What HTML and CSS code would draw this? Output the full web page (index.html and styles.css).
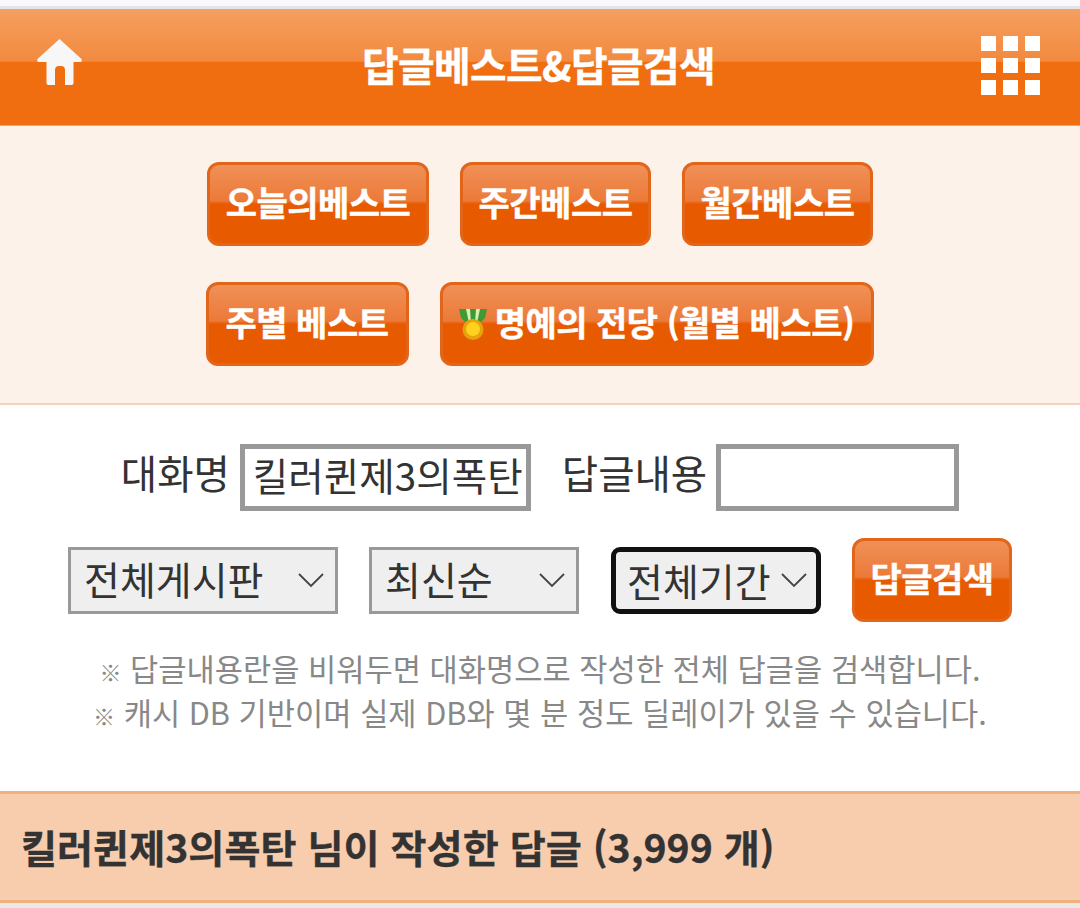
FILE: index.html
```html
<!DOCTYPE html>
<html lang="ko">
<head>
    <meta charset="UTF-8">
    <meta name="viewport" content="width=device-width, initial-scale=1.0">
    <title>답글베스트&amp;답글검색</title>
    <link rel="stylesheet" href="styles.css">
</head>
<body>

    <div class="status-strip"></div>

    <!-- Top bar -->
    <header class="topbar">
        <a class="home-link" href="#">
            <svg width="45" height="46" viewBox="0 0 45 46">
                <path fill="#f7f7f7" d="M22.500 0 L44.500 20 Q45.500 23 43 23 L36.500 23 L36.500 44 Q36.500 46 34.500 46 L28 46 L28 31 Q28 27 24 27 L22 27 Q18 27 18 31 L18 46 L11.500 46 Q9.500 46 9.500 44 L9.500 23 L2 23 Q-0.500 23 0.500 20 Z"/>
            </svg>
        </a>
        <h1 class="title">답글베스트&amp;답글검색</h1>
        <div class="grid-menu">
            <span></span><span></span><span></span>
            <span></span><span></span><span></span>
            <span></span><span></span><span></span>
        </div>
    </header>

    <!-- Best links -->
    <section class="best-panel">
        <div class="btn-row">
            <a class="btn btn-today" href="#">오늘의베스트</a>
            <a class="btn btn-week" href="#">주간베스트</a>
            <a class="btn btn-month" href="#">월간베스트</a>
        </div>
        <div class="btn-row">
            <a class="btn btn-weekly" href="#">주별 베스트</a>
            <a class="btn btn-hall" href="#">
                <svg class="medal" width="28" height="31" viewBox="0 0 28 31">
                    <path fill="#3f9a35" d="M0 0 H28 L26 9 L19 16 H9 L2 9 Z"/>
                    <path fill="#d8efb5" d="M7 0 H11 L12 14 H10 Z M17 0 H21 L18 14 H16 Z"/>
                    <circle cx="14" cy="20.500" r="10.500" fill="#e8a30c"/>
                    <circle cx="14" cy="20" r="7" fill="#ffd21f"/>
                </svg>명예의 전당 (월별 베스트)</a>
        </div>
    </section>

    <!-- Search form -->
    <form class="search-form">
        <div class="form-row form-row-names">
            <label class="field-label" for="nick">대화명</label>
            <input class="text-input nick-input" id="nick" type="text" value="킬러퀸제3의폭탄">
            <label class="field-label reply-label" for="reply">답글내용</label>
            <input class="text-input reply-input" id="reply" type="text">
        </div>
        <div class="form-row form-row-selects">
            <select class="pick pick-board"><option>전체게시판</option></select>
            <select class="pick pick-order"><option>최신순</option></select>
            <select class="pick pick-period"><option>전체기간</option></select>
            <button class="btn btn-search" type="button">답글검색</button>
        </div>
        <p class="note"><span class="note-mark">※</span> 답글내용란을 비워두면 대화명으로 작성한 전체 답글을 검색합니다.</p>
        <p class="note"><span class="note-mark">※</span> 캐시 DB 기반이며 실제 DB와 몇 분 정도 딜레이가 있을 수 있습니다.</p>
    </form>

    <div class="result-band">킬러퀸제3의폭탄 님이 작성한 답글 (3,999 개)</div>
    <div class="bottom-strip"></div>

</body>
</html>
```

FILE: styles.css
```css
/* General page styling */
body {
    margin: 0;
    height: 908px;
    overflow: hidden;
    background: #ffffff;
    color: #333333;
    font-family: "Noto Sans CJK KR", "Noto Sans", sans-serif;
}

.status-strip {
    height: 6px;
    background: #f8f8fd;
    border-bottom: 3px solid #e4e4e8;
}

/* Top bar */
.topbar {
    display: grid;
    grid-template-columns: 1fr auto 1fr;
    align-items: center;
    height: 116px;
    padding: 0 40px 0 37px;
    background: linear-gradient(#f59f60 0%, #f28a3e 45%, #f06e10 46%, #f06e10 100%);
    border-bottom: 1px solid #f2a468;
}

.home-link {
    display: flex;
    margin-top: -10px;
}

.title {
    margin: -8px 0 0;
    color: #ffffff;
    font-size: 39.8px;
    font-weight: 700;
    letter-spacing: -0.6px;
    -webkit-text-stroke: 0.4px #ffffff;
}

.grid-menu {
    display: grid;
    grid-template-columns: repeat(3, 15px);
    grid-auto-rows: 15px;
    gap: 7px;
    justify-content: end;
    margin-top: -4px;
}

.grid-menu span {
    background: #ffffff;
}

/* Best links */
.best-panel {
    display: flex;
    flex-direction: column;
    gap: 36px;
    padding: 36px 0 37px;
    background: #fdf2e9;
    border-bottom: 2px solid #f6d2b8;
}

.btn-row {
    display: flex;
    justify-content: center;
    gap: 31px;
}

.btn {
    display: flex;
    align-items: center;
    justify-content: center;
    box-sizing: border-box;
    height: 84px;
    padding: 0 0 6px;
    color: #ffffff;
    font-family: inherit;
    font-size: 34px;
    font-weight: 700;
    letter-spacing: -0.5px;
    text-decoration: none;
    white-space: nowrap;
    -webkit-text-stroke: 0.4px #ffffff;
    background: linear-gradient(#f09058 0%, #ec7a38 46%, #e85a00 50%, #e85a00 100%);
    border: 3px solid #e2661a;
    border-radius: 12px;
}

.btn-today { width: 222px; }
.btn-week { width: 191px; }
.btn-month { width: 191px; }
.btn-weekly { width: 203px; margin-left: -1px; }
.btn-hall { width: 434px; }

.medal {
    margin: 6px 8px 0 0;
}

/* Search form */
.search-form {
    padding-top: 39px;
}

.form-row {
    display: flex;
    justify-content: center;
}

.form-row-names {
    align-items: center;
}

.field-label {
    margin: -12px 10px 0 0;
    font-size: 39.5px;
}

.reply-label {
    margin-left: 31px;
    margin-right: 9px;
}

.text-input {
    box-sizing: border-box;
    height: 67px;
    padding: 0 2px 8px 8px;
    color: #333333;
    font-family: inherit;
    font-size: 38.6px;
    background: #ffffff;
    border: 5px solid #999999;
    border-radius: 0;
}

.nick-input { width: 291px; }
.reply-input { width: 243px; }

.form-row-selects {
    align-items: center;
    gap: 31px;
    margin-top: 27px;
}

.pick {
    appearance: none;
    box-sizing: border-box;
    height: 67px;
    padding: 0 0 9px 13px;
    color: #333333;
    font-family: inherit;
    font-size: 39px;
    background-color: #efefef;
    background-image: url("data:image/svg+xml,%3Csvg xmlns='http://www.w3.org/2000/svg' width='26' height='16'%3E%3Cpath d='M1 2 L13 14 L25 2' fill='none' stroke='%23444' stroke-width='1.800'/%3E%3C/svg%3E");
    background-repeat: no-repeat;
    border: 3px solid #999999;
    border-radius: 0;
}

.pick-board { width: 270px; background-position: right 11px center; }
.pick-order { width: 210px; background-position: right 11px center; }

.pick-period {
    width: 210px;
    margin-left: 1px;
    padding-left: 11px;
    background-position: right 9px center;
    border: 5px solid #111111;
    border-radius: 9px;
}

.btn-search {
    width: 160px;
}

.note {
    margin: 0;
    color: #888888;
    font-size: 30.7px;
    line-height: 44px;
    text-align: center;
}

.note-mark {
    font-size: 22px;
    line-height: 0;
}

.form-row-selects + .note {
    margin-top: 24px;
}

/* Result heading */
.result-band {
    box-sizing: border-box;
    height: 112px;
    margin-top: 57px;
    padding: 24px 0 0 21px;
    color: #333333;
    font-size: 39.2px;
    font-weight: 700;
    -webkit-text-stroke: 0.3px #333333;
    background: #f8cdae;
    border-top: 3px solid #f0b080;
    border-bottom: 3px solid #f0b080;
}

.bottom-strip {
    height: 5px;
    background: #ebe8e6;
}
```
